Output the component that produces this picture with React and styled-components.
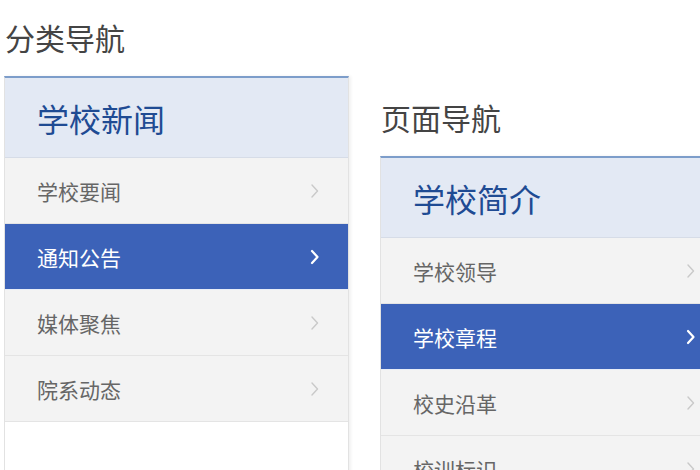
import React from 'react';
import styled, { createGlobalStyle } from 'styled-components';

const GlobalStyle = createGlobalStyle`
    html, body {
        margin: 0;
        padding: 0;
        background: #ffffff;
        height: 470px;
        overflow: hidden;
    }
    body {
        font-family: "Noto Sans CJK SC", "Noto Sans", sans-serif;
    }
`;

const Page = styled.div`
    display: flex;
    align-items: flex-start;
    gap: 31px;
    padding-left: 4px;
`;

const Column = styled.div`
    display: flex;
    flex-flow: column;
    width: 345px;
    flex-shrink: 0;
    padding-top: ${props => props.offset}px;
`;

const Heading = styled.h2`
    margin: 0 0 24px 1px;
    font-size: 30px;
    line-height: 30px;
    font-weight: 400;
    color: #444444;
`;

const Panel = styled.div`
    border-top: 2px solid #7d9dca;
    border-left: 1px solid #e2e2e2;
    border-right: 1px solid #e2e2e2;
    box-shadow: 2px 0 3px rgba(0, 0, 0, 0.06);
    background: #ffffff;
    min-height: 420px;
`;

const PanelTitle = styled.div`
    height: 79px;
    display: flex;
    align-items: center;
    padding-left: 32px;
    background: #e3e9f4;
    border-bottom: 1px solid #d6dce7;
    font-size: 32px;
    color: #1f4b93;
`;

const Item = styled.div`
    height: 65px;
    display: flex;
    align-items: center;
    justify-content: space-between;
    padding: 0 28px 0 32px;
    border-bottom: 1px solid ${props => (props.active ? '#e8edf7' : '#e4e4e4')};
    background: ${props => (props.active ? '#3c62b8' : '#f3f3f3')};
    color: ${props => (props.active ? '#ffffff' : '#666666')};
    font-size: 21px;

    svg {
        flex-shrink: 0;
    }
`;

function Chevron({ active }) {
    return (
        <svg width="11" height="18" viewBox="0 0 11 18">
            <polyline
                points="3,3 8.5,9 3,15"
                fill="none"
                stroke={active ? '#ffffff' : '#c9c9c9'}
                strokeWidth={active ? 2.2 : 1.4}
                strokeLinecap="round"
                strokeLinejoin="round"
            />
        </svg>
    );
}

const navs = [
    {
        heading: '分类导航',
        offset: 22,
        title: '学校新闻',
        items: ['学校要闻', '通知公告', '媒体聚焦', '院系动态'],
        active: 1,
    },
    {
        heading: '页面导航',
        offset: 102,
        title: '学校简介',
        items: ['学校领导', '学校章程', '校史沿革', '校训标识'],
        active: 1,
    },
];

export default function App() {
    return (
        <>
            <GlobalStyle />
            <Page>
                {navs.map(nav => (
                    <Column key={nav.heading} offset={nav.offset}>
                        <Heading>{nav.heading}</Heading>
                        <Panel>
                            <PanelTitle>{nav.title}</PanelTitle>
                            {nav.items.map((item, idx) => (
                                <Item key={item} active={idx === nav.active}>
                                    <span>{item}</span>
                                    <Chevron active={idx === nav.active} />
                                </Item>
                            ))}
                        </Panel>
                    </Column>
                ))}
            </Page>
        </>
    );
}
